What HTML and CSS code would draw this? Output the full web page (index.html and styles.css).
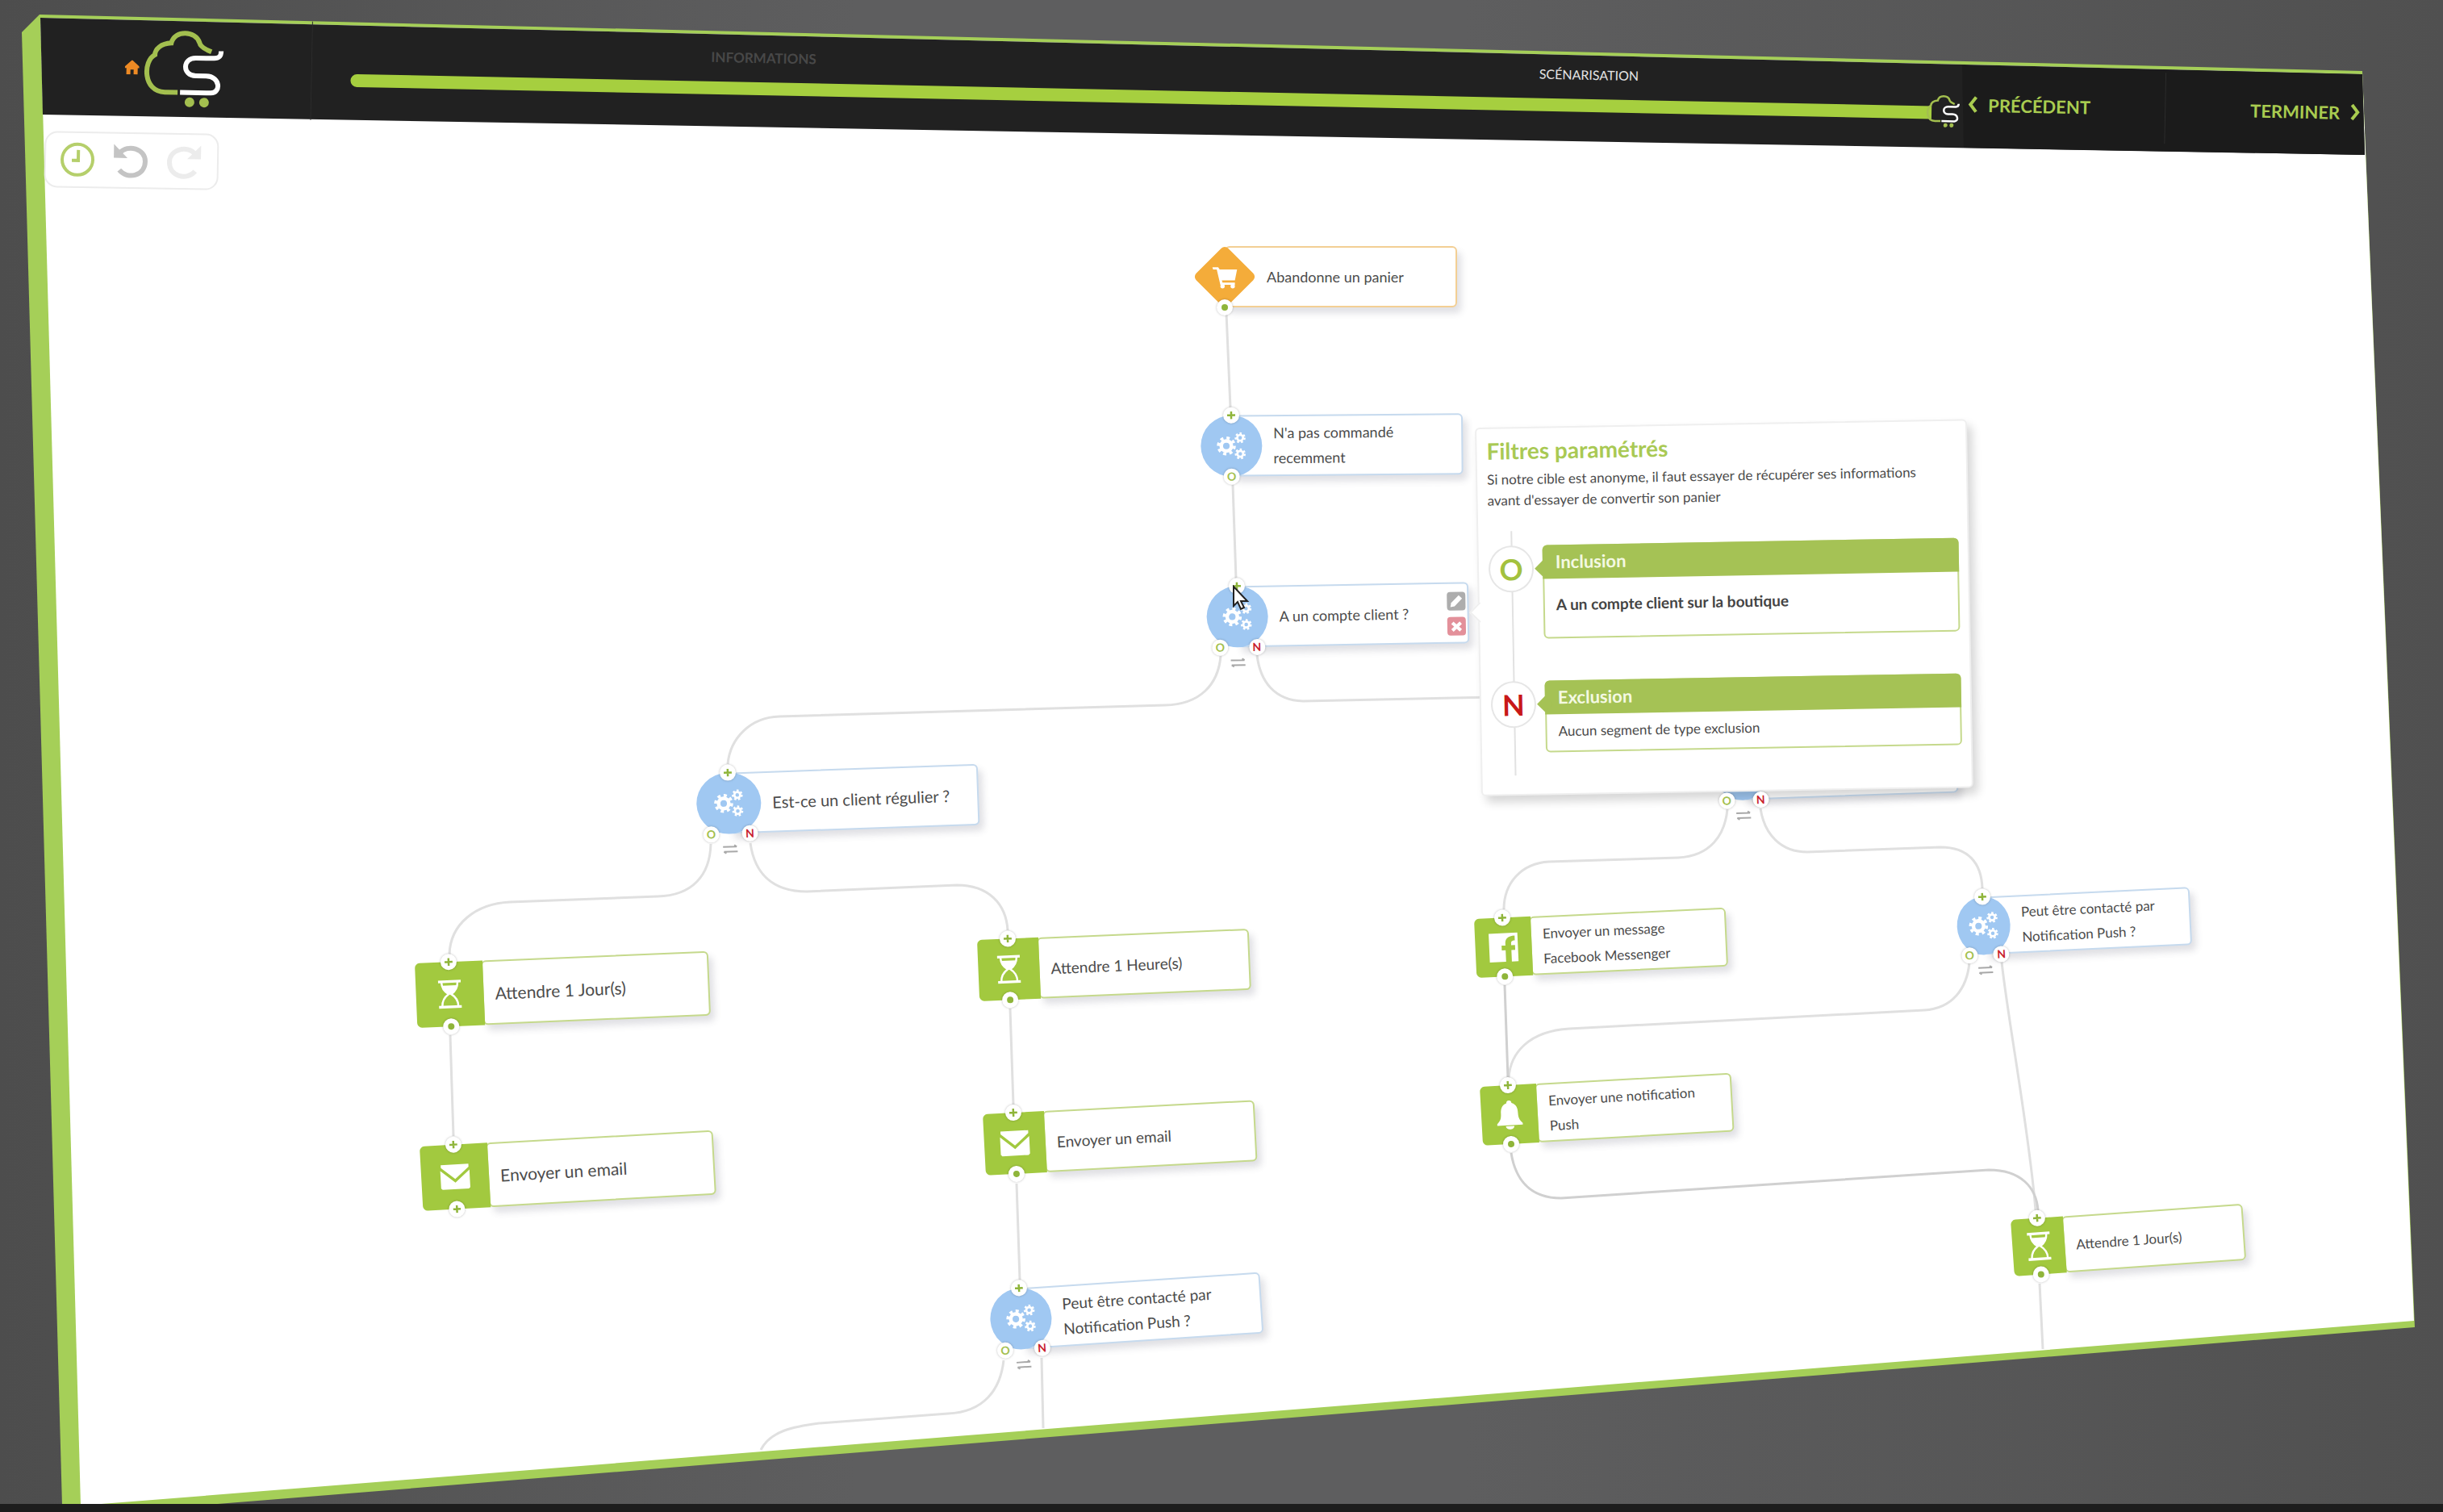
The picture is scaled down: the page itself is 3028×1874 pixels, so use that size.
FILE: index.html
```html
<!DOCTYPE html>
<html lang="fr">
<head>
<meta charset="utf-8">
<meta name="viewport" content="width=device-width, initial-scale=1">
<title>Scénarisation</title>
<link rel="stylesheet" href="styles.css">
</head>
<body>
<svg class="sprite" aria-hidden="true">
  <symbol id="gears" viewBox="0 0 42 40">
    <g fill="none" stroke="#fff">
      <circle cx="14" cy="20" r="7" stroke-width="5"/>
      <circle cx="14" cy="20" r="11" stroke-width="4" stroke-dasharray="4.32 4.32"/>
      <circle cx="33" cy="9" r="4" stroke-width="3"/>
      <circle cx="33" cy="9" r="6" stroke-width="3" stroke-dasharray="2.7 2.68"/>
      <circle cx="33" cy="31" r="4" stroke-width="3"/>
      <circle cx="33" cy="31" r="6" stroke-width="3" stroke-dasharray="2.7 2.68"/>
    </g>
  </symbol>
  <symbol id="cart" viewBox="0 0 40 40">
    <path fill="#fff" d="M3 7h8l2 3h24l-3 15H16l1 3h17v3H14L9 10H4z"/>
    <circle cx="17" cy="33" r="3" fill="#fff"/><circle cx="31" cy="33" r="3" fill="#fff"/>
  </symbol>
  <symbol id="hourglass" viewBox="0 0 40 46">
    <path fill="#fff" d="M3 2h34v4H3zM3 40h34v4H3z"/>
    <path fill="none" stroke="#fff" stroke-width="3" d="M8 5c0 9 4 14 10 18-6 4-10 9-10 18M32 5c0 9-4 14-10 18 6 4 10 9 10 18"/>
    <path fill="#fff" d="M9 10h22c-1 7-5 10-9 13h-4c-4-3-8-6-9-13z"/>
  </symbol>
  <symbol id="mail" viewBox="0 0 42 36">
    <path fill="#fff" d="M2 1h38v4L21 21 2 5zM1 9l20 17L41 9v24l-2 2H3l-2-2z"/>
  </symbol>
  <symbol id="facebook" viewBox="0 0 32 32">
    <path fill="#fff" d="M1 1h30v30h-7V19h4v-5h-4v-2c0-2 1-3 4-3V4c-7 0-10 3-10 8v2h-4v5h4v12H1z"/>
  </symbol>
  <symbol id="bell" viewBox="0 0 32 36">
    <path fill="#fff" d="M16 1c2 0 3 1 3 3 6 2 7 7 7 12 0 7 2 9 5 12v2H1v-2c3-3 5-5 5-12 0-5 1-10 7-12 0-2 1-3 3-3zM11 31h10c0 5-10 5-10 0z"/>
  </symbol>
  <symbol id="plus" viewBox="0 0 12 12"><path stroke="#8fb53a" stroke-width="3" d="M6 0v12M0 6h12"/></symbol>
  <symbol id="swap" viewBox="0 0 20 14"><path fill="none" stroke="#a8a8a8" stroke-width="2" d="M1 4h17M15 2l3 2M19 10H2M5 12l-3-2"/></symbol>
  <symbol id="brand" viewBox="155 35 130 105">
    <g fill="none" stroke-width="6">
      <path stroke="#a3bf4f" d="M264 66c-8-3-14-6-15-11-5-15-31-16-35 1-13 1-20 8-20 15-15 8-14 46 13 46h16"/>
      <path stroke="#fff" d="M276 65c0 7-3 9-9 9h-22c-17 0-17 22 0 22h13c18 0 19 21 6 21h-38"/>
    </g>
    <circle cx="238" cy="129" r="6" fill="#a3bf4f"/><circle cx="256" cy="129" r="6" fill="#a3bf4f"/>
  </symbol>
</svg>

<div class="stage">
  <svg class="slab" viewBox="0 0 3028 1874" preserveAspectRatio="none" aria-hidden="true">
    <polygon fill="#a5cf58" points="27,40 49,18 2928,88 2993,1645 245,1866 77,1866"/>
    <polygon fill="#fff" points="50,22 2928,92 2992,1637 100,1866"/>
    <polygon fill="#212121" points="50,22 2928,92 2931,192 53,142"/>
    <polygon fill="#1b1b1b" points="2432,81 2928,92 2931,192 2434,183"/>
  </svg>

  <header class="topbar">
    <a class="home" href="#" aria-label="Accueil">
      <svg class="home__house" viewBox="0 0 18 18"><path fill="#ee8a24" d="M9 0l9 8v2h-2v8h-5v-6H7v6H2v-8H0V8z"/></svg>
      <svg class="home__logo"><use href="#brand"/></svg>
    </a>
    <div class="steps">
      <div class="steps__names">
        <span class="step">INFORMATIONS</span>
        <span class="step step--on">SCÉNARISATION</span>
      </div>
      <div class="steps__bar"><svg class="steps__marker"><use href="#brand"/></svg></div>
    </div>
    <nav class="pager">
      <button class="pager__btn pager__btn--prev" type="button"><svg viewBox="0 0 14 22"><path d="M11 2L4 11l7 9"/></svg>PRÉCÉDENT</button>
      <button class="pager__btn pager__btn--next" type="button">TERMINER<svg viewBox="0 0 14 22"><path d="M3 2l7 9-7 9"/></svg></button>
    </nav>
  </header>

  <div class="tools">
    <button type="button" aria-label="Historique"><svg viewBox="0 0 44 44"><g fill="none" stroke="#b5cf6b" stroke-width="4"><circle cx="22" cy="22" r="19"/><path d="M23 10v13h-8"/></g></svg></button>
    <button type="button" aria-label="Annuler"><svg viewBox="0 0 44 44"><path fill="none" stroke="#c4c4c4" stroke-width="6" d="M8 13c10-12 32-6 32 10 0 18-22 23-32 11"/><path fill="#c4c4c4" d="M1 2v17h17z"/></svg></button>
    <button type="button" aria-label="Rétablir"><svg viewBox="0 0 44 44"><path fill="none" stroke="#ececec" stroke-width="6" d="M36 13C26 1 4 7 4 23c0 18 22 23 32 11"/><path fill="#ececec" d="M43 2v17H26z"/></svg></button>
  </div>

  <main class="canvas">
    <svg class="wires" aria-hidden="true">
      <path d="M1520 388L1525 505M1528 601L1532 718"/>
      <path d="M1513 813C1510 848 1488 873 1444 874L966 888C930 889 905 915 902 947"/>
      <path d="M1558 812C1562 845 1580 868 1615 869L1850 864"/>
      <path d="M881 1046C880 1085 858 1110 815 1111L632 1118C590 1120 558 1145 557 1183"/>
      <path d="M930 1045C935 1080 955 1105 1000 1105L1186 1097C1225 1097 1247 1120 1249 1153"/>
      <path d="M558 1283L562 1408M1252 1250L1256 1369M1260 1467L1264 1586"/>
      <path d="M1244 1686C1240 1722 1220 1750 1175 1752L1015 1764C985 1768 955 1773 943 1797"/>
      <path d="M1291 1683L1293 1770"/>
      <path d="M2141 1003C2138 1035 2120 1061 2080 1063L1920 1068C1885 1070 1864 1095 1864 1127"/>
      <path d="M2182 1002C2187 1035 2208 1056 2240 1056L2405 1050C2440 1050 2456 1070 2457 1101"/>
      <path d="M2441 1193C2438 1225 2420 1250 2385 1252L1945 1275C1895 1278 1872 1305 1870 1336"/>
      <path d="M2481 1192C2488 1260 2515 1400 2523 1500M2528 1591L2532 1672"/>
      <path class="wires__strong" d="M1865 1221L1869 1336M1873 1429C1878 1460 1895 1485 1935 1485L2465 1450C2505 1450 2524 1472 2526 1500"/>
    </svg>

    <div class="node node--start n-cart">
      <div class="node__badge"><svg><use href="#cart"/></svg></div><div class="node__label">Abandonne un panier</div>
      <button class="port port--out port--dot" type="button" aria-label="Sortie"></button>
    </div>
    <div class="node node--test n-recent">
      <div class="node__badge"><svg><use href="#gears"/></svg></div><div class="node__label">N'a pas commandé<br>recemment</div>
      <button class="port port--in" type="button" aria-label="Ajouter"><svg><use href="#plus"/></svg></button>
      <button class="port port--out" type="button">O</button>
    </div>
    <div class="node node--test n-account">
      <div class="node__badge"><svg><use href="#gears"/></svg></div><div class="node__label">A un compte client ?</div>
      <button class="port port--in" type="button" aria-label="Ajouter"><svg><use href="#plus"/></svg></button>
      <button class="port port--yes" type="button">O</button><button class="port port--no" type="button">N</button>
      <svg class="node__swap"><use href="#swap"/></svg>
      <div class="node__actions">
        <button type="button" aria-label="Modifier"><svg viewBox="0 0 22 22"><path fill="#fff" d="M4 18l1-5 9-9 4 4-9 9z"/></svg></button>
        <button class="is-delete" type="button" aria-label="Supprimer"><svg viewBox="0 0 22 22"><path stroke="#fff" stroke-width="4" d="M6 7l10 9M16 7L6 16"/></svg></button>
      </div>
    </div>
    <div class="node node--test n-regular">
      <div class="node__badge"><svg><use href="#gears"/></svg></div><div class="node__label">Est-ce un client régulier ?</div>
      <button class="port port--in" type="button" aria-label="Ajouter"><svg><use href="#plus"/></svg></button>
      <button class="port port--yes" type="button">O</button><button class="port port--no" type="button">N</button>
      <svg class="node__swap"><use href="#swap"/></svg>
    </div>
    <div class="node n-day">
      <div class="node__badge"><svg><use href="#hourglass"/></svg></div><div class="node__label">Attendre 1 Jour(s)</div>
      <button class="port port--in" type="button" aria-label="Ajouter"><svg><use href="#plus"/></svg></button>
      <button class="port port--out port--dot" type="button" aria-label="Sortie"></button>
    </div>
    <div class="node n-mail-day">
      <div class="node__badge"><svg><use href="#mail"/></svg></div><div class="node__label">Envoyer un email</div>
      <button class="port port--in" type="button" aria-label="Ajouter"><svg><use href="#plus"/></svg></button>
      <button class="port port--out" type="button" aria-label="Ajouter"><svg><use href="#plus"/></svg></button>
    </div>
    <div class="node n-hour">
      <div class="node__badge"><svg><use href="#hourglass"/></svg></div><div class="node__label">Attendre 1 Heure(s)</div>
      <button class="port port--in" type="button" aria-label="Ajouter"><svg><use href="#plus"/></svg></button>
      <button class="port port--out port--dot" type="button" aria-label="Sortie"></button>
    </div>
    <div class="node n-mail-hour">
      <div class="node__badge"><svg><use href="#mail"/></svg></div><div class="node__label">Envoyer un email</div>
      <button class="port port--in" type="button" aria-label="Ajouter"><svg><use href="#plus"/></svg></button>
      <button class="port port--out port--dot" type="button" aria-label="Sortie"></button>
    </div>
    <div class="node node--test n-push-left">
      <div class="node__badge"><svg><use href="#gears"/></svg></div><div class="node__label">Peut être contacté par<br>Notification Push ?</div>
      <button class="port port--in" type="button" aria-label="Ajouter"><svg><use href="#plus"/></svg></button>
      <button class="port port--yes" type="button">O</button><button class="port port--no" type="button">N</button>
      <svg class="node__swap"><use href="#swap"/></svg>
    </div>
    <div class="node node--test n-covered">
      <div class="node__badge"></div><div class="node__label"></div>
    </div>
    <div class="node n-messenger">
      <div class="node__badge"><svg><use href="#facebook"/></svg></div><div class="node__label">Envoyer un message<br>Facebook Messenger</div>
      <button class="port port--in" type="button" aria-label="Ajouter"><svg><use href="#plus"/></svg></button>
      <button class="port port--out port--dot" type="button" aria-label="Sortie"></button>
    </div>
    <div class="node n-notify">
      <div class="node__badge"><svg><use href="#bell"/></svg></div><div class="node__label">Envoyer une notification<br>Push</div>
      <button class="port port--in" type="button" aria-label="Ajouter"><svg><use href="#plus"/></svg></button>
      <button class="port port--out port--dot" type="button" aria-label="Sortie"></button>
    </div>
    <div class="node node--test n-push-right">
      <div class="node__badge"><svg><use href="#gears"/></svg></div><div class="node__label">Peut être contacté par<br>Notification Push ?</div>
      <button class="port port--in" type="button" aria-label="Ajouter"><svg><use href="#plus"/></svg></button>
      <button class="port port--yes" type="button">O</button><button class="port port--no" type="button">N</button>
      <svg class="node__swap"><use href="#swap"/></svg>
    </div>
    <div class="node n-day-right">
      <div class="node__badge"><svg><use href="#hourglass"/></svg></div><div class="node__label">Attendre 1 Jour(s)</div>
      <button class="port port--in" type="button" aria-label="Ajouter"><svg><use href="#plus"/></svg></button>
      <button class="port port--out port--dot" type="button" aria-label="Sortie"></button>
    </div>

    <section class="filters">
      <h2 class="filters__title">Filtres paramétrés</h2>
      <p class="filters__text">Si notre cible est anonyme, il faut essayer de récupérer ses informations<br>avant d'essayer de convertir son panier</p>
      <div class="rules">
        <div class="rule">
          <span class="rule__mark">O</span>
          <div class="rule__card">
            <h3 class="rule__head">Inclusion</h3>
            <p class="rule__body rule__body--strong">A un compte client sur la boutique</p>
          </div>
        </div>
        <div class="rule">
          <span class="rule__mark rule__mark--no">N</span>
          <div class="rule__card">
            <h3 class="rule__head">Exclusion</h3>
            <p class="rule__body">Aucun segment de type exclusion</p>
          </div>
        </div>
      </div>
    </section>

    <div class="node node--test node--ports n-covered">
      <button class="port port--yes" type="button">O</button><button class="port port--no" type="button">N</button>
      <svg class="node__swap"><use href="#swap"/></svg>
    </div>

    <svg class="cursor" viewBox="0 0 22 32" aria-hidden="true"><path fill="#fff" stroke="#222" stroke-width="2" d="M2 2v24l5-5 4 9 4-2-4-8h8z"/></svg>
  </main>
</div>
<div class="edge"></div>
</body>
</html>
```

FILE: styles.css
```css
* { box-sizing: border-box; }

body {
  margin: 0;
  min-height: 100vh;
  display: flex;
  flex-direction: column;
  background: linear-gradient(90deg, #4d4d4d, #5e5e5f 35%, #5e5e5f 60%, #505050);
  color: #4c4c4c;
  font-family: Lato, "Noto Sans", sans-serif;
  font-size: 18px;
  overflow: hidden;
}

button {
  border: 0;
  padding: 0;
  background: none;
  color: inherit;
  font: inherit;
  cursor: pointer;
}

svg { display: block; }
h2, h3, p { margin: 0; }
.sprite { position: absolute; width: 0; height: 0; }

.stage { position: relative; flex: 1; padding: 20px 100px 0 50px; }
.slab { position: absolute; left: 0; top: 0; width: 100%; height: 100vh; }
.edge { position: relative; height: 10px; background: #1d1d1d; }

/* Top bar */
.topbar {
  position: relative;
  display: flex;
  height: 122px;
  transform: rotate(1.16deg);
  transform-origin: 0 0;
}
.home {
  display: flex;
  align-items: center;
  width: 338px;
  padding-left: 106px;
  border-right: 1px solid #2c2c2c;
}
.home__house { width: 18px; height: 18px; margin-right: -20px; }
.home__logo { width: 130px; height: 105px; }
.steps { flex: 1; padding: 22px 0 0 48px; }
.steps__names { display: grid; grid-template-columns: 1fr 1fr; margin-right: -86px; text-align: center; }
.step { color: #484848; font-size: 17px; font-weight: 700; line-height: 24px; }
.step--on { color: #e4e4e4; font-size: 16px; font-weight: 400; }
.steps__bar { position: relative; height: 16px; margin-top: 18px; border-radius: 8px 0 0 8px; background: #a6cf3f; }
.steps__marker { position: absolute; right: -38px; top: -16px; width: 56px; height: 44px; }
.pager { display: flex; align-items: center; }
.pager__btn {
  display: flex;
  align-items: center;
  gap: 12px;
  width: 242px;
  height: 88px;
  color: #a9cc50;
  font-size: 22px;
  font-weight: 700;
}
.pager__btn svg { width: 14px; height: 22px; fill: none; stroke: #a9cc50; stroke-width: 4px; }
.pager__btn--prev { width: 290px; padding-left: 44px; border-right: 1px solid #2c2c2c; }
.pager__btn--next { justify-content: flex-end; }

/* History tools */
.tools {
  position: relative;
  display: flex;
  align-items: center;
  gap: 22px;
  width: 216px;
  height: 70px;
  margin: 22px 0 0 5px;
  padding-left: 17px;
  border: 2px solid #ececec;
  border-radius: 16px;
  background: #fff;
  transform: rotate(1deg);
}
.tools svg { width: 44px; height: 44px; }

/* Scenario canvas */
.canvas, .wires { position: absolute; left: 0; top: 0; width: 100%; height: 100%; }
.wires { fill: none; stroke: #e0e0e0; stroke-width: 3px; }
.wires__strong { stroke: #d0d0d0; }

.node {
  --tone: #a2c93f;
  --line: #c5d98c;
  --badge: 76px;
  --text: 17px;
  position: absolute;
  display: flex;
  height: 76px;
  transform-origin: 0 0;
}
.node__badge {
  position: relative;
  z-index: 1;
  display: grid;
  place-items: center;
  flex: none;
  width: var(--badge);
  border-radius: 6px 0 0 6px;
  background: var(--tone);
}
.node__badge svg { width: 38px; height: 38px; }
.node__label {
  display: flex;
  align-items: center;
  flex: 1;
  margin-left: -2px;
  padding-left: 14px;
  border: 2px solid var(--line);
  border-radius: 6px;
  background: #fff;
  box-shadow: 5px 7px 8px rgb(60 60 90 / 16%);
  font-size: var(--text);
  line-height: 31px;
  white-space: nowrap;
}
.node--test { --tone: #a0c8f2; --line: #c6daee; }
.node--test .node__badge { border-radius: 50%; }
.node--start { --tone: #f4ac3a; --line: #f3cf94; }
.node--start .node__badge { background: none; }
.node--start .node__badge::before {
  content: "";
  position: absolute;
  inset: 10px;
  border-radius: 6px;
  background: var(--tone);
  transform: rotate(45deg);
}
.node--start .node__badge svg { position: relative; width: 36px; }
.node--test .node__label, .node--start .node__label {
  margin-left: calc(var(--badge) / -2);
  padding-left: calc(var(--badge) / 2 + 12px);
}

.port {
  position: absolute;
  z-index: 2;
  left: calc(var(--badge) / 2);
  display: grid;
  place-items: center;
  width: 20px;
  height: 20px;
  margin: -10px;
  border-radius: 50%;
  background: #fff;
  box-shadow: 0 0 3px rgb(0 0 0 / 25%);
  color: #a3bf4f;
  font-size: 14px;
  font-weight: 700;
  line-height: 20px;
}
.port svg { width: 10px; height: 10px; }
.port--in { top: 0; }
.port--out, .port--yes, .port--no { top: 100%; }
.port--yes { left: calc(var(--badge) * .21); }
.port--no { left: calc(var(--badge) * .81); color: #c8202c; }
.port--dot::before { content: ""; width: 8px; height: 8px; border-radius: 50%; background: #8fb53a; }
.node__swap { position: absolute; top: 100%; left: calc(var(--badge) / 2 - 10px); width: 20px; height: 14px; margin-top: 12px; }
.node__actions { position: absolute; right: 4px; top: 12px; display: grid; gap: 8px; }
.node__actions button { width: 23px; height: 23px; border-radius: 4px; background: #adadad; }
.node__actions .is-delete { background: #e3909a; }

.n-cart, .n-recent, .n-account { --text: 18px; }
.n-cart { left: 1480px; top: 305px; width: 326px; }
.n-recent { left: 1488px; top: 515px; width: 325px; transform: rotate(-.5deg); }
.n-account { left: 1495px; top: 727px; width: 325px; transform: rotate(-1deg); }
.n-regular { --badge: 80px; --text: 20px; left: 862px; top: 959px; width: 350px; transform: rotate(-2deg); }
.n-day, .n-mail-day { --badge: 84px; --text: 21px; width: 364px; height: 80px; }
.n-day { left: 514px; top: 1194px; transform: rotate(-2.4deg); }
.n-mail-day { left: 520px; top: 1421px; transform: rotate(-3.2deg); }
.n-hour, .n-mail-hour { --text: 19px; width: 337px; }
.n-hour { left: 1211px; top: 1165px; transform: rotate(-2.4deg); }
.n-mail-hour { left: 1218px; top: 1381px; transform: rotate(-3deg); }
.n-push-left { --text: 19px; left: 1225px; top: 1599px; width: 337px; transform: rotate(-3.8deg); }
.n-covered { --badge: 70px; left: 2123px; top: 919px; width: 302px; height: 74px; transform: rotate(-2deg); }
.n-messenger, .n-notify { --badge: 70px; width: 312px; height: 73px; }
.n-messenger { left: 1827px; top: 1139px; transform: rotate(-2.6deg); }
.n-notify { left: 1834px; top: 1347px; transform: rotate(-3.2deg); }
.n-push-right { --badge: 66px; left: 2424px; top: 1113px; width: 290px; height: 72px; transform: rotate(-2.7deg); }
.n-day-right { --badge: 65px; left: 2492px; top: 1512px; width: 288px; height: 70px; transform: rotate(-4deg); }

/* Filter details */
.filters {
  position: absolute;
  z-index: 1;
  left: 1828px;
  top: 530px;
  width: 610px;
  padding: 10px 16px 51px 12px;
  border: 2px solid #efefef;
  border-radius: 6px;
  background: #fff;
  box-shadow: 6px 8px 12px rgb(0 0 0 / 16%);
  transform: rotate(-1deg);
  transform-origin: 0 0;
}
.filters::before {
  content: "";
  position: absolute;
  left: -9px;
  top: 218px;
  width: 16px;
  height: 16px;
  border: solid #efefef;
  border-width: 0 0 2px 2px;
  background: #fff;
  transform: rotate(45deg);
}
.filters__title { color: #a9c954; font-size: 28px; line-height: 34px; }
.filters__text { margin-top: 6px; font-size: 17px; line-height: 26px; white-space: nowrap; }
.rules { position: relative; display: grid; gap: 52px; margin-top: 43px; }
.rules::before { content: ""; position: absolute; left: 28px; top: -18px; bottom: -28px; width: 2px; background: #e2e2e2; }
.rule { display: flex; gap: 11px; margin-right: -5px; }
.rule__mark {
  position: relative;
  flex: none;
  width: 56px;
  height: 58px;
  border: 2px solid #e6e6e6;
  border-radius: 50%;
  background: #fff;
  color: #a3c13e;
  font-size: 36px;
  font-weight: 700;
  line-height: 54px;
  text-align: center;
}
.rule__mark--no { color: #c81818; }
.rule__card { position: relative; flex: 1; border: 2px solid #c5d98c; border-radius: 6px; }
.rule__head {
  position: relative;
  height: 42px;
  margin: -2px;
  padding-left: 16px;
  border-radius: 6px 6px 0 0;
  background: #a5c255;
  color: #f4f9e2;
  font-size: 22px;
  line-height: 42px;
}
.rule__head::before {
  content: "";
  position: absolute;
  left: -7px;
  top: 22px;
  width: 14px;
  height: 14px;
  background: #a5c255;
  transform: rotate(45deg);
}
.rule__body { padding: 7px 0 8px 14px; font-size: 17px; line-height: 32px; }
.rule__body--strong { padding: 18px 0 24px 14px; color: #444; font-size: 19px; font-weight: 700; }

.node--ports { z-index: 2; }
.cursor { position: absolute; z-index: 3; left: 1527px; top: 725px; width: 22px; height: 32px; }
```
